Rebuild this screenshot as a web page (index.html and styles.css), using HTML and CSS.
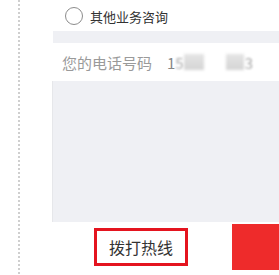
FILE: index.html
```html
<!DOCTYPE html>
<html lang="zh-CN">
<head>
  <meta charset="UTF-8" />
  <meta name="viewport" content="width=device-width, initial-scale=1.0" />
  <title>业务咨询</title>
  <link rel="stylesheet" href="styles.css">
</head>
<body>
<div class="page">
  <div class="rail"></div>
  <div class="content">
    <!-- ===== Option ===== -->
    <label class="option">
      <span class="radio"></span>
      <span>其他业务咨询</span>
    </label>

    <div class="gap"></div>

    <!-- ===== Phone row ===== -->
    <div class="phone-row">
      <span class="phone-label">您的电话号码</span>
      <span class="phone-num">1<span class="soft">5</span><span class="mask m1"></span><span class="mask m2"></span><span class="soft">3</span></span>
    </div>

    <div class="memo"></div>

    <!-- ===== Actions ===== -->
    <div class="actions">
      <button class="btn-call">拨打热线</button>
      <button class="btn-submit"></button>
    </div>
  </div>
</div>
</body>
</html>
```

FILE: styles.css
```css
:root {
  --gray-bg: #eff0f4;
  --text: #333;
  --muted: #9a9a9a;
  --red: #e4141f;
  --red-block: #ee2b2b;
}

*, *::before, *::after { box-sizing: border-box; }
body {
  margin: 0;
  font-family: "Noto Sans CJK SC", "Noto Sans", sans-serif;
  background: #fff;
  color: var(--text);
}

/* ===== Layout ===== */
.page { display: flex; height: 275px; overflow: hidden; }
.rail {
  width: 2px;
  margin-left: 18px;
  background: repeating-linear-gradient(to bottom, #cfcfcf 0 2px, transparent 2px 4px);
}
.content { flex: 1; margin-left: 32px; display: flex; flex-direction: column; }

/* ===== Option ===== */
.option {
  display: flex; align-items: center; gap: 7px;
  height: 31px; padding-left: 13px; padding-top: 1px;
  font-size: 13px;
}
.radio {
  width: 18px; height: 18px;
  border: 1.5px solid #8c8c8c; border-radius: 50%;
}

.gap { height: 12px; background: var(--gray-bg); margin-left: 1px; }

/* ===== Phone row ===== */
.phone-row {
  display: flex; align-items: center;
  height: 38px; padding-left: 10px;
  font-size: 15px; color: var(--muted);
}
.phone-label { width: 105px; }
.phone-num { display: flex; align-items: center; color: #888; }
.soft { filter: blur(0.8px); color: #aaa; }
.mask {
  display: inline-block; height: 16px;
  background: linear-gradient(#e4e4e4, #d4d4d4);
  filter: blur(1.5px);
}
.mask.m1 { width: 20px; margin-right: 22px; }
.mask.m2 { width: 18px; margin-right: 1px; }

.memo { height: 141px; background: var(--gray-bg); border-left: 1px solid #e6e7ea; }

/* ===== Actions ===== */
.actions { display: flex; align-items: flex-start; padding-top: 2px; }
button { border: none; cursor: pointer; font-family: inherit; padding: 0; }
.btn-call {
  margin-left: 42px; margin-top: 4px;
  width: 94px; height: 38px;
  background: #fff; color: var(--text);
  border: 3px solid var(--red);
  font-size: 16px;
}
.btn-submit {
  margin-left: auto;
  width: 47px; height: 46px;
  background: var(--red-block);
}
```
